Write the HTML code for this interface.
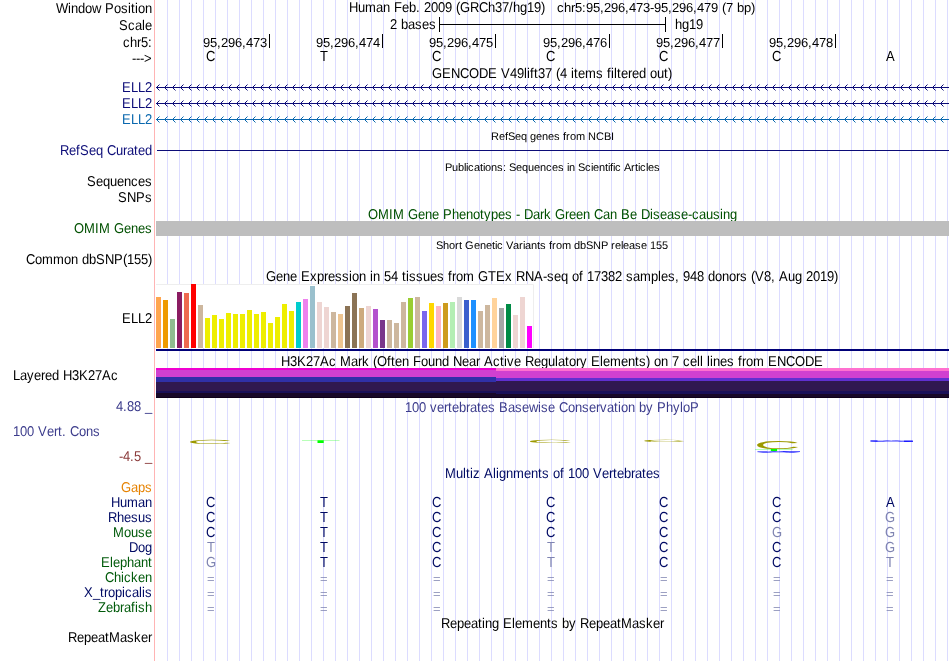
<!DOCTYPE html>
<html><head><meta charset="utf-8"><title>UCSC Genome Browser</title>
<style>html,body{margin:0;padding:0;background:#fff}svg{display:block}text{font-family:"Liberation Sans",sans-serif;font-size:13px;white-space:pre;text-rendering:geometricPrecision}.s{font-size:11px}</style>
</head><body>
<svg style="will-change:transform" width="950" height="661" viewBox="0 0 950 661">
<defs>
<pattern id="ad" patternUnits="userSpaceOnUse" x="156" y="0" width="8" height="7"><g fill="#0c0c78" shape-rendering="crispEdges"><rect x="1" y="2" width="1" height="3"/><rect x="2" y="1" width="1" height="1"/><rect x="2" y="5" width="1" height="1"/><rect x="3" y="0" width="1" height="1" opacity=".5"/><rect x="3" y="6" width="1" height="1" opacity=".5"/></g></pattern>
<pattern id="al" patternUnits="userSpaceOnUse" x="156" y="0" width="8" height="7"><g fill="#0a68ae" shape-rendering="crispEdges"><rect x="1" y="2" width="1" height="3"/><rect x="2" y="1" width="1" height="1"/><rect x="2" y="5" width="1" height="1"/><rect x="3" y="0" width="1" height="1" opacity=".5"/><rect x="3" y="6" width="1" height="1" opacity=".5"/></g></pattern>
</defs>
<rect width="950" height="661" fill="#fff"/>
<path d="M167.5 0V661M179.5 0V661M191.5 0V661M203.5 0V661M215.5 0V661M227.5 0V661M239.5 0V661M251.5 0V661M263.5 0V661M275.5 0V661M287.5 0V661M299.5 0V661M311.5 0V661M323.5 0V661M335.5 0V661M347.5 0V661M359.5 0V661M371.5 0V661M383.5 0V661M395.5 0V661M407.5 0V661M419.5 0V661M431.5 0V661M443.5 0V661M455.5 0V661M467.5 0V661M479.5 0V661M491.5 0V661M503.5 0V661M515.5 0V661M527.5 0V661M539.5 0V661M551.5 0V661M563.5 0V661M575.5 0V661M587.5 0V661M599.5 0V661M611.5 0V661M623.5 0V661M635.5 0V661M647.5 0V661M659.5 0V661M671.5 0V661M683.5 0V661M695.5 0V661M707.5 0V661M719.5 0V661M731.5 0V661M743.5 0V661M755.5 0V661M767.5 0V661M779.5 0V661M791.5 0V661M803.5 0V661M815.5 0V661M827.5 0V661M839.5 0V661M851.5 0V661M863.5 0V661M875.5 0V661M887.5 0V661M899.5 0V661M911.5 0V661M923.5 0V661M935.5 0V661M947.5 0V661" stroke="#dcdcff" stroke-width="1" shape-rendering="crispEdges" fill="none"/>
<rect x="154" y="0" width="1" height="661" fill="#ffb4b4"/>
<text transform="matrix(1 0 0 1.09 0 13)" x="56 68 71 78 85 92 101 105 114 121 128 131 135 138 145">Window Position</text>
<text transform="matrix(1 0 0 1.09 0 30)" x="119 128 135 142 145">Scale</text>
<text transform="matrix(1 0 0 1.09 0 47)" x="123 130 137 141 148">chr5:</text>
<text transform="matrix(1 0 0 1.09 0 63)" x="132 136 140 144">---&gt;</text>
<text transform="matrix(1 0 0 1.09 0 12)" x="349 358 365 376 383 390 394 402 409 416 420 424 431 438 445 452 456 460 470 479 488 495 502 509 513 520 527 534 541">Human Feb. 2009 (GRCh37/hg19)</text>
<text transform="matrix(1 0 0 1.0 0 12)" x="557 564 571 575 582 586 593 600 604 611 618 625 629 636 643 650 654 661 668 672 679 686 693 697 704 711 718 722 726 733 737 744 751">chr5:95,296,473-95,296,479 (7 bp)</text>
<text transform="matrix(1 0 0 1.09 0 29)" x="390 397 401 408 415 422 429">2 bases</text>
<text transform="matrix(1 0 0 1.09 0 29)" x="675 682 689 696">hg19</text>
<g fill="#000" shape-rendering="crispEdges"><rect x="439" y="17" width="1" height="15"/><rect x="665" y="17" width="1" height="15"/><rect x="439" y="24" width="227" height="1"/></g>
<rect x="269" y="34" width="1" height="14" fill="#000" shape-rendering="crispEdges"/>
<text transform="matrix(1 0 0 1.0 0 47)" x="203 210 217 221 228 235 242 246 253 260">95,296,473</text>
<text transform="matrix(1 0 0 1.118 0 61)" x="206">C</text>
<rect x="382" y="34" width="1" height="14" fill="#000" shape-rendering="crispEdges"/>
<text transform="matrix(1 0 0 1.0 0 47)" x="316 323 330 334 341 348 355 359 366 373">95,296,474</text>
<text transform="matrix(1 0 0 1.118 0 61)" x="320">T</text>
<rect x="495" y="34" width="1" height="14" fill="#000" shape-rendering="crispEdges"/>
<text transform="matrix(1 0 0 1.0 0 47)" x="429 436 443 447 454 461 468 472 479 486">95,296,475</text>
<text transform="matrix(1 0 0 1.118 0 61)" x="432">C</text>
<rect x="609" y="34" width="1" height="14" fill="#000" shape-rendering="crispEdges"/>
<text transform="matrix(1 0 0 1.0 0 47)" x="543 550 557 561 568 575 582 586 593 600">95,296,476</text>
<text transform="matrix(1 0 0 1.118 0 61)" x="546">C</text>
<rect x="722" y="34" width="1" height="14" fill="#000" shape-rendering="crispEdges"/>
<text transform="matrix(1 0 0 1.0 0 47)" x="656 663 670 674 681 688 695 699 706 713">95,296,477</text>
<text transform="matrix(1 0 0 1.118 0 61)" x="659">C</text>
<rect x="835" y="34" width="1" height="14" fill="#000" shape-rendering="crispEdges"/>
<text transform="matrix(1 0 0 1.0 0 47)" x="769 776 783 787 794 801 808 812 819 826">95,296,478</text>
<text transform="matrix(1 0 0 1.118 0 61)" x="772">C</text>
<text transform="matrix(1 0 0 1.118 0 61)" x="886">A</text>
<text transform="matrix(1 0 0 1.09 0 78)" x="432 442 451 460 469 479 488 497 501 510 517 524 527 530 534 538 545 552 556 560 567 571 574 578 585 596 603 607 611 614 617 621 628 632 639 646 650 657 664 668">GENCODE V49lift37 (4 items filtered out)</text>
<text transform="matrix(1 0 0 1.09 0 92)" x="122 131 138 145" fill="#0c0c78">ELL2</text>
<rect x="156" y="87" width="793" height="1" fill="#0c0c78" shape-rendering="crispEdges"/>
<g transform="translate(0,84)"><rect x="156" y="0" width="788" height="7" fill="url(#ad)"/></g>
<text transform="matrix(1 0 0 1.09 0 108)" x="122 131 138 145" fill="#0c0c78">ELL2</text>
<rect x="156" y="103" width="793" height="1" fill="#0c0c78" shape-rendering="crispEdges"/>
<g transform="translate(0,100)"><rect x="156" y="0" width="788" height="7" fill="url(#ad)"/></g>
<text transform="matrix(1 0 0 1.09 0 124)" x="122 131 138 145" fill="#0a68ae">ELL2</text>
<rect x="156" y="119" width="793" height="1" fill="#0a68ae" shape-rendering="crispEdges"/>
<g transform="translate(0,116)"><rect x="156" y="0" width="788" height="7" fill="url(#al)"/></g>
<text class="s" transform="matrix(1 0 0 1.0 0 140)" x="491 499 505 508 515 521 527 530 536 542 548 554 560 563 566 570 576 585 588 596 604 611">RefSeq genes from NCBI</text>
<text transform="matrix(1 0 0 1.09 0 155)" x="60 69 76 80 89 96 103 107 116 123 127 134 138 145" fill="#0c0c78">RefSeq Curated</text>
<rect x="157" y="150" width="792" height="1" fill="#0c0c78" shape-rendering="crispEdges"/>
<text class="s" transform="matrix(1 0 0 1.0 0 171)" x="445 452 458 464 466 468 474 480 483 485 491 497 503 506 509 516 522 528 534 540 546 552 558 564 567 569 575 578 585 591 593 599 605 608 610 613 615 621 624 631 635 638 640 646 648 654">Publications: Sequences in Scientific Articles</text>
<text transform="matrix(1 0 0 1.09 0 186)" x="87 96 103 110 117 124 131 138 145">Sequences</text>
<text transform="matrix(1 0 0 1.09 0 202)" x="118 127 136 145">SNPs</text>
<text transform="matrix(1 0 0 1.09 0 219)" x="368 378 389 393 404 408 418 425 432 439 443 452 459 466 473 480 484 491 498 505 512 516 520 524 533 540 544 551 555 565 569 576 583 590 594 603 610 617 621 630 637 641 650 653 660 667 674 681 688 692 699 706 713 720 723 730" fill="#005000">OMIM Gene Phenotypes - Dark Green Can Be Disease-causing</text>
<text transform="matrix(1 0 0 1.09 0 233)" x="74 84 95 99 110 114 124 131 138 145" fill="#005000">OMIM Genes</text>
<rect x="156" y="221" width="793" height="15" fill="#bebebe" shape-rendering="crispEdges"/>
<text class="s" transform="matrix(1 0 0 1.0 0 249)" x="436 443 449 455 459 462 465 474 480 486 492 495 497 503 506 513 519 523 525 531 537 540 546 549 552 556 562 571 574 580 586 593 601 608 611 615 621 623 629 635 641 647 650 656 662">Short Genetic Variants from dbSNP release 155</text>
<text transform="matrix(1 0 0 1.09 0 264)" x="26 35 42 53 64 71 78 82 89 96 105 114 123 127 134 141 148">Common dbSNP(155)</text>
<text transform="matrix(1 0 0 1.09 0 281)" x="266 276 283 290 297 301 310 317 324 328 335 342 349 352 359 366 370 373 380 384 391 398 402 406 409 416 423 430 437 444 448 452 456 463 474 478 488 496 505 512 516 525 534 543 547 554 561 568 572 579 583 587 594 601 608 615 622 626 633 640 651 658 661 668 675 679 683 690 697 704 708 715 722 729 736 740 747 751 755 764 771 775 779 788 795 802 806 813 820 827 834">Gene Expression in 54 tissues from GTEx RNA-seq of 17382 samples, 948 donors (V8, Aug 2019)</text>
<text transform="matrix(1 0 0 1.09 0 323)" x="122 131 138 145">ELL2</text>
<rect x="156" y="284" width="378" height="64" fill="#fff"/><path d="M156 284.5H533.5V348" fill="none" stroke="#eeeeee"/>
<g shape-rendering="crispEdges">
<rect x="156" y="297" width="5" height="51" fill="#FFA54F"/>
<rect x="163" y="300" width="5" height="48" fill="#EE9A00"/>
<rect x="170" y="319" width="5" height="29" fill="#8FBC8F"/>
<rect x="177" y="292" width="5" height="56" fill="#8B1C62"/>
<rect x="184" y="293" width="5" height="55" fill="#EE6A50"/>
<rect x="191" y="284" width="5" height="64" fill="#FF0000"/>
<rect x="198" y="305" width="5" height="43" fill="#CDB79E"/>
<rect x="205" y="318" width="5" height="30" fill="#EEEE00"/>
<rect x="212" y="315" width="5" height="33" fill="#EEEE00"/>
<rect x="219" y="319" width="5" height="29" fill="#EEEE00"/>
<rect x="226" y="313" width="5" height="35" fill="#EEEE00"/>
<rect x="233" y="314" width="5" height="34" fill="#EEEE00"/>
<rect x="240" y="314" width="5" height="34" fill="#EEEE00"/>
<rect x="247" y="310" width="5" height="38" fill="#EEEE00"/>
<rect x="254" y="314" width="5" height="34" fill="#EEEE00"/>
<rect x="261" y="312" width="5" height="36" fill="#EEEE00"/>
<rect x="268" y="323" width="5" height="25" fill="#EEEE00"/>
<rect x="275" y="317" width="5" height="31" fill="#EEEE00"/>
<rect x="282" y="304" width="5" height="44" fill="#EEEE00"/>
<rect x="289" y="311" width="5" height="37" fill="#EEEE00"/>
<rect x="296" y="302" width="5" height="46" fill="#00CDCD"/>
<rect x="303" y="299" width="5" height="49" fill="#EE82EE"/>
<rect x="310" y="286" width="5" height="62" fill="#9AC0CD"/>
<rect x="317" y="302" width="5" height="46" fill="#EED5D2"/>
<rect x="324" y="307" width="5" height="41" fill="#EED5D2"/>
<rect x="331" y="312" width="5" height="36" fill="#CDB79E"/>
<rect x="338" y="314" width="5" height="34" fill="#EEC591"/>
<rect x="345" y="306" width="5" height="42" fill="#8B7355"/>
<rect x="352" y="293" width="5" height="55" fill="#8B7355"/>
<rect x="359" y="308" width="5" height="40" fill="#CDAA7D"/>
<rect x="366" y="306" width="5" height="42" fill="#EED5D2"/>
<rect x="373" y="309" width="5" height="39" fill="#B452CD"/>
<rect x="380" y="320" width="5" height="28" fill="#7A378B"/>
<rect x="387" y="320" width="5" height="28" fill="#CDB79E"/>
<rect x="394" y="323" width="5" height="25" fill="#CDB79E"/>
<rect x="401" y="302" width="5" height="46" fill="#CDB79E"/>
<rect x="408" y="298" width="5" height="50" fill="#9ACD32"/>
<rect x="415" y="297" width="5" height="51" fill="#CDB79E"/>
<rect x="422" y="311" width="5" height="37" fill="#7A67EE"/>
<rect x="429" y="303" width="5" height="45" fill="#FFD700"/>
<rect x="436" y="306" width="5" height="42" fill="#FFB6C1"/>
<rect x="443" y="303" width="5" height="45" fill="#CD9B1D"/>
<rect x="450" y="302" width="5" height="46" fill="#B4EEB4"/>
<rect x="457" y="297" width="5" height="51" fill="#D9D9D9"/>
<rect x="464" y="300" width="5" height="48" fill="#3A5FCD"/>
<rect x="471" y="300" width="5" height="48" fill="#1E90FF"/>
<rect x="478" y="311" width="5" height="37" fill="#CDB79E"/>
<rect x="485" y="305" width="5" height="43" fill="#CDB79E"/>
<rect x="492" y="298" width="5" height="50" fill="#FFD39B"/>
<rect x="499" y="308" width="5" height="40" fill="#A6A6A6"/>
<rect x="506" y="304" width="5" height="44" fill="#008B45"/>
<rect x="513" y="315" width="5" height="33" fill="#EED5D2"/>
<rect x="520" y="297" width="5" height="51" fill="#EED5D2"/>
<rect x="527" y="326" width="5" height="22" fill="#FF00FF"/>
</g>
<rect x="156" y="349" width="793" height="2" fill="#000078" shape-rendering="crispEdges"/>
<text transform="matrix(1 0 0 1.09 0 366)" x="281 290 297 306 313 320 329 336 340 351 358 362 369 373 377 387 391 395 402 409 413 421 428 435 442 449 453 462 469 476 480 484 493 500 504 507 514 521 525 534 541 548 555 558 565 569 576 580 587 591 600 603 610 621 628 635 639 646 650 654 661 668 672 679 683 690 697 700 703 707 710 713 720 727 734 738 742 746 753 764 768 777 786 795 805 814">H3K27Ac Mark (Often Found Near Active Regulatory Elements) on 7 cell lines from ENCODE</text>
<text transform="matrix(1 0 0 1.09 0 380)" x="13 20 27 34 41 45 52 59 63 72 79 88 95 102 111">Layered H3K27Ac</text>
<g shape-rendering="crispEdges">
<rect x="156" y="368" width="340" height="2" fill="#f000d0"/>
<rect x="156" y="370" width="340" height="7" fill="#d040d0"/>
<rect x="156" y="377" width="340" height="5" fill="#3030a8"/>
<rect x="156" y="382" width="340" height="9" fill="#301850"/>
<rect x="156" y="391" width="340" height="2" fill="#1a1058"/>
<rect x="156" y="393" width="340" height="5" fill="#180828"/>
<rect x="496" y="368" width="453" height="3" fill="#ff70d0"/>
<rect x="496" y="371" width="453" height="7" fill="#d040d0"/>
<rect x="496" y="378" width="453" height="3" fill="#6030d0"/>
<rect x="496" y="381" width="453" height="10" fill="#301850"/>
<rect x="496" y="391" width="453" height="3" fill="#1a1058"/>
<rect x="496" y="394" width="453" height="4" fill="#180828"/>
<rect x="156" y="397" width="793" height="1" fill="#0e0018"/>
</g>
<text transform="matrix(1 0 0 1.09 0 412)" x="405 412 419 426 430 437 444 448 452 459 466 470 477 481 488 495 499 508 515 522 529 538 541 548 555 559 568 575 582 589 596 600 607 614 618 621 628 635 639 646 653 657 666 673 680 683 690" fill="#3c3c8c">100 vertebrates Basewise Conservation by PhyloP</text>
<text transform="matrix(1 0 0 1.09 0 411)" x="116 123 127 134 141 145" fill="#3c3c8c">4.88 _</text>
<text transform="matrix(1 0 0 1.09 0 436)" x="13 20 27 34 38 47 54 58 62 66 70 79 86 93" fill="#3c3c8c">100 Vert. Cons</text>
<text transform="matrix(1 0 0 1.09 0 461)" x="119 123 130 134 141 145" fill="#8c3c3c">-4.5 _</text>
<text transform="matrix(0.6395 0 0 0.0593 186.75 444.14)" style="font-size:100px" fill="#9c9900">C</text>
<text transform="matrix(0.6632 0 0 0.0422 300.51 443.20)" style="font-size:100px" fill="#00ff00">T</text>
<text transform="matrix(0.6474 0 0 0.0466 526.71 443.15)" style="font-size:100px" fill="#9c9900">C</text>
<text transform="matrix(0.6316 0 0 0.0325 641.29 442.07)" style="font-size:100px" fill="#9c9900">C</text>
<text transform="matrix(0.6474 0 0 0.1130 753.71 448.59)" style="font-size:100px" fill="#9c9900">C</text>
<text transform="matrix(0.6721 0 0 0.0305 753.49 451.20)" style="font-size:100px" fill="#00ff00">T</text>
<text transform="matrix(0.6485 0 0 0.0247 756.87 452.50)" style="font-size:100px" fill="#0000ff">A</text>
<g fill="#0000ff"><rect x="757.5" y="451" width="42.5" height="1" opacity=".25"/><rect x="757.5" y="451" width="10" height="1" opacity=".4"/><rect x="783" y="451" width="17" height="1" opacity=".5"/></g>
<text transform="matrix(0.6560 0 0 0.0233 869.87 441.70)" style="font-size:100px" fill="#0000ff">A</text>
<g fill="#0000ff"><rect x="870.5" y="440.2" width="42" height="1.4" opacity=".3"/><rect x="870.5" y="440.2" width="7" height="1.5" opacity=".6"/><rect x="904" y="440.6" width="9" height="1.4" opacity=".75"/></g>
<text transform="matrix(1 0 0 1.09 0 478)" x="445 456 463 466 470 473 480 484 493 496 499 506 513 524 531 538 542 549 553 560 564 568 575 582 589 593 602 609 613 617 624 631 635 642 646 653" fill="#000a64">Multiz Alignments of 100 Vertebrates</text>
<text transform="matrix(1 0 0 1.09 0 492)" x="121 131 138 145" fill="#e68200">Gaps</text>
<text transform="matrix(1 0 0 1.09 0 507)" x="111 120 127 138 145" fill="#000a64">Human</text>
<text transform="matrix(1 0 0 1.118 0 507)" x="206" fill="#000a64">C</text>
<text transform="matrix(1 0 0 1.118 0 507)" x="320" fill="#000a64">T</text>
<text transform="matrix(1 0 0 1.118 0 507)" x="432" fill="#000a64">C</text>
<text transform="matrix(1 0 0 1.118 0 507)" x="546" fill="#000a64">C</text>
<text transform="matrix(1 0 0 1.118 0 507)" x="659" fill="#000a64">C</text>
<text transform="matrix(1 0 0 1.118 0 507)" x="772" fill="#000a64">C</text>
<text transform="matrix(1 0 0 1.118 0 507)" x="886" fill="#000a64">A</text>
<text transform="matrix(1 0 0 1.09 0 522)" x="108 117 124 131 138 145" fill="#000a64">Rhesus</text>
<text transform="matrix(1 0 0 1.118 0 522)" x="206" fill="#000a64">C</text>
<text transform="matrix(1 0 0 1.118 0 522)" x="320" fill="#000a64">T</text>
<text transform="matrix(1 0 0 1.118 0 522)" x="432" fill="#000a64">C</text>
<text transform="matrix(1 0 0 1.118 0 522)" x="546" fill="#000a64">C</text>
<text transform="matrix(1 0 0 1.118 0 522)" x="659" fill="#000a64">C</text>
<text transform="matrix(1 0 0 1.118 0 522)" x="772" fill="#000a64">C</text>
<text transform="matrix(1 0 0 1.118 0 522)" x="885" fill="#7f84b1">G</text>
<text transform="matrix(1 0 0 1.09 0 537)" x="113 124 131 138 145" fill="#005a0a">Mouse</text>
<text transform="matrix(1 0 0 1.118 0 537)" x="206" fill="#000a64">C</text>
<text transform="matrix(1 0 0 1.118 0 537)" x="320" fill="#000a64">T</text>
<text transform="matrix(1 0 0 1.118 0 537)" x="432" fill="#000a64">C</text>
<text transform="matrix(1 0 0 1.118 0 537)" x="546" fill="#000a64">C</text>
<text transform="matrix(1 0 0 1.118 0 537)" x="659" fill="#000a64">C</text>
<text transform="matrix(1 0 0 1.118 0 537)" x="772" fill="#7f84b1">G</text>
<text transform="matrix(1 0 0 1.118 0 537)" x="885" fill="#7f84b1">G</text>
<text transform="matrix(1 0 0 1.09 0 552)" x="129 138 145" fill="#000a64">Dog</text>
<text transform="matrix(1 0 0 1.118 0 552)" x="207" fill="#7f84b1">T</text>
<text transform="matrix(1 0 0 1.118 0 552)" x="320" fill="#000a64">T</text>
<text transform="matrix(1 0 0 1.118 0 552)" x="432" fill="#000a64">C</text>
<text transform="matrix(1 0 0 1.118 0 552)" x="547" fill="#7f84b1">T</text>
<text transform="matrix(1 0 0 1.118 0 552)" x="659" fill="#000a64">C</text>
<text transform="matrix(1 0 0 1.118 0 552)" x="772" fill="#000a64">C</text>
<text transform="matrix(1 0 0 1.118 0 552)" x="885" fill="#7f84b1">G</text>
<text transform="matrix(1 0 0 1.09 0 567)" x="101 110 113 120 127 134 141 148" fill="#005a0a">Elephant</text>
<text transform="matrix(1 0 0 1.118 0 567)" x="206" fill="#7f84b1">G</text>
<text transform="matrix(1 0 0 1.118 0 567)" x="320" fill="#000a64">T</text>
<text transform="matrix(1 0 0 1.118 0 567)" x="432" fill="#000a64">C</text>
<text transform="matrix(1 0 0 1.118 0 567)" x="547" fill="#7f84b1">T</text>
<text transform="matrix(1 0 0 1.118 0 567)" x="659" fill="#000a64">C</text>
<text transform="matrix(1 0 0 1.118 0 567)" x="772" fill="#000a64">C</text>
<text transform="matrix(1 0 0 1.118 0 567)" x="886" fill="#7f84b1">T</text>
<text transform="matrix(1 0 0 1.09 0 582)" x="105 114 121 124 131 138 145" fill="#005a0a">Chicken</text>
<text transform="matrix(1 0 0 0.923 0 582.95)" x="207" fill="#7f84b1">=</text>
<text transform="matrix(1 0 0 0.923 0 582.95)" x="320" fill="#7f84b1">=</text>
<text transform="matrix(1 0 0 0.923 0 582.95)" x="433" fill="#7f84b1">=</text>
<text transform="matrix(1 0 0 0.923 0 582.95)" x="547" fill="#7f84b1">=</text>
<text transform="matrix(1 0 0 0.923 0 582.95)" x="660" fill="#7f84b1">=</text>
<text transform="matrix(1 0 0 0.923 0 582.95)" x="773" fill="#7f84b1">=</text>
<text transform="matrix(1 0 0 0.923 0 582.95)" x="886" fill="#7f84b1">=</text>
<text transform="matrix(1 0 0 1.09 0 597)" x="84 93 100 104 108 115 122 125 132 139 142 145" fill="#000a64">X_tropicalis</text>
<text transform="matrix(1 0 0 0.923 0 597.95)" x="207" fill="#7f84b1">=</text>
<text transform="matrix(1 0 0 0.923 0 597.95)" x="320" fill="#7f84b1">=</text>
<text transform="matrix(1 0 0 0.923 0 597.95)" x="433" fill="#7f84b1">=</text>
<text transform="matrix(1 0 0 0.923 0 597.95)" x="547" fill="#7f84b1">=</text>
<text transform="matrix(1 0 0 0.923 0 597.95)" x="660" fill="#7f84b1">=</text>
<text transform="matrix(1 0 0 0.923 0 597.95)" x="773" fill="#7f84b1">=</text>
<text transform="matrix(1 0 0 0.923 0 597.95)" x="886" fill="#7f84b1">=</text>
<text transform="matrix(1 0 0 1.09 0 612)" x="98 106 113 120 124 131 135 138 145" fill="#005a0a">Zebrafish</text>
<text transform="matrix(1 0 0 0.923 0 612.95)" x="207" fill="#7f84b1">=</text>
<text transform="matrix(1 0 0 0.923 0 612.95)" x="320" fill="#7f84b1">=</text>
<text transform="matrix(1 0 0 0.923 0 612.95)" x="433" fill="#7f84b1">=</text>
<text transform="matrix(1 0 0 0.923 0 612.95)" x="547" fill="#7f84b1">=</text>
<text transform="matrix(1 0 0 0.923 0 612.95)" x="660" fill="#7f84b1">=</text>
<text transform="matrix(1 0 0 0.923 0 612.95)" x="773" fill="#7f84b1">=</text>
<text transform="matrix(1 0 0 0.923 0 612.95)" x="886" fill="#7f84b1">=</text>
<text transform="matrix(1 0 0 1.09 0 628)" x="441 450 457 464 471 478 482 485 492 499 503 512 515 522 533 540 547 551 558 562 569 576 580 589 596 603 610 617 621 632 639 646 653 660">Repeating Elements by RepeatMasker</text>
<text transform="matrix(1 0 0 1.09 0 642)" x="68 77 84 91 98 105 109 120 127 134 141 148">RepeatMasker</text>
</svg></body></html>
